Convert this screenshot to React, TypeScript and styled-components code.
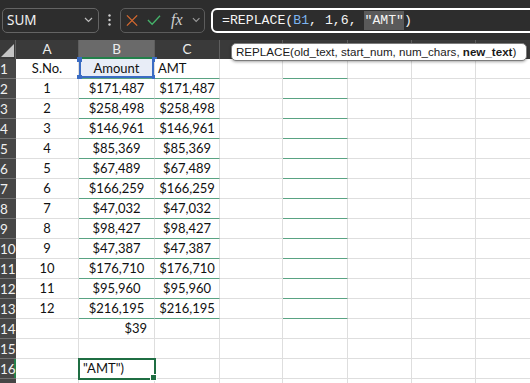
import React from 'react';
import styled, { createGlobalStyle, css } from 'styled-components';

const GlobalStyle = createGlobalStyle`
  html, body {
    margin: 0;
    padding: 0;
    background: #ffffff;
    overflow: hidden;
  }
  body {
    font-family: "Lato", "Liberation Sans", sans-serif;
  }
`;

const Screen = styled.div`
  position: relative;
  width: 530px;
  height: 383px;
  overflow: hidden;
  background: #ffffff;
`;

// ---- formula bar ----

const Toolbar = styled.div`
  height: 40px;
  background: #2d2d2d;
  display: flex;
  align-items: center;
  padding-left: 2px;
  box-sizing: border-box;
`;

const NameBox = styled.div`
  width: 97px;
  height: 25px;
  box-sizing: border-box;
  border: 1px solid #646464;
  border-radius: 5px;
  display: flex;
  align-items: center;
  justify-content: space-between;
  padding: 0 5px 0 4px;
  color: #f2f2f2;
  font-family: "Noto Sans", sans-serif;
  font-size: 13.5px;
`;

const Dots = styled.div`
  width: 21px;
  display: flex;
  justify-content: center;
`;

const FuncBox = styled.div`
  width: 85px;
  height: 25px;
  box-sizing: border-box;
  border: 1px solid #5c5c5c;
  border-radius: 5px;
  display: flex;
  align-items: center;
  padding: 0 4px 0 5px;
  gap: 9px;
`;

const Fx = styled.span`
  font-family: "Liberation Serif", serif;
  font-style: italic;
  font-size: 16px;
  color: #cfcfcf;
  margin-left: 1px;
`;

const FormulaInput = styled.div`
  flex: 1;
  margin-left: 6px;
  margin-right: -12px;
  height: 25px;
  box-sizing: border-box;
  border: 2px solid #ffffff;
  border-radius: 6px;
  display: flex;
  align-items: center;
  padding-left: 9px;
  color: #f4f4f4;
  font-family: "Liberation Mono", monospace;
  font-size: 13.2px;
  white-space: pre;
`;

const RefText = styled.span`
  color: #7db4f0;
`;

const Highlight = styled.span`
  background: #5a5a5a;
  padding: 2px 0;
`;

// ---- grid ----

const Sheet = styled.div`
  display: grid;
  grid-template-columns: 16px 63px 76px 65px 63px 65px 64px 64px 64px 64px;
  grid-template-rows: 19px;
  grid-auto-rows: 20px;
`;

const Corner = styled.div`
  background: #3a3a3a;
  border-right: 1px solid #5e5e5e;
  box-sizing: border-box;
  display: flex;
  align-items: flex-end;
  justify-content: flex-end;
  padding: 0 1px 2px 0;
`;

const ColHeader = styled.div<{ $selected?: boolean }>`
  background: ${(p) => (p.$selected ? '#6a6a6a' : '#3a3a3a')};
  border-right: 1px solid #5e5e5e;
  box-sizing: border-box;
  color: #ececec;
  font-size: 13.5px;
  line-height: 19px;
  text-align: center;
  ${(p) =>
    p.$selected &&
    css`
      box-shadow: inset 0 -2px 0 #23804a;
    `}
`;

const RowHeader = styled.div<{ $selected?: boolean }>`
  background: #464646;
  border-bottom: 1px solid #707070;
  box-sizing: border-box;
  color: #f0f0f0;
  font-size: 13.5px;
  line-height: 20px;
  white-space: nowrap;
  overflow: hidden;
  ${(p) =>
    p.$selected &&
    css`
      box-shadow: inset -2px 0 0 #23804a;
    `}
`;

type Align = 'left' | 'center' | 'right';

const Cell = styled.div<{ $align?: Align; $green?: boolean; $ref?: boolean; $active?: boolean }>`
  position: relative;
  box-sizing: border-box;
  border-right: 1px solid #dedede;
  border-bottom: 1px solid ${(p) => (p.$green ? '#5aa383' : '#dedede')};
  padding: 0 ${(p) => (p.$align === 'right' ? '7px' : '3px')} 0 3px;
  text-align: ${(p) => p.$align || 'left'};
  font-size: 13px;
  line-height: 19px;
  color: #111111;
  white-space: nowrap;
  background: #ffffff;

  ${(p) =>
    p.$ref &&
    css`
      background: #e8edf7;
      box-shadow: inset 2px 0 0 #3a6cc4, inset -2px 0 0 #3a6cc4, inset 0 -2px 0 #3a6cc4;
      &::before,
      &::after {
        content: '';
        position: absolute;
        width: 5px;
        height: 5px;
        background: #3a6cc4;
        bottom: -2px;
      }
      &::before {
        left: -2px;
      }
      &::after {
        right: -3px;
      }
    `}

  ${(p) =>
    p.$active &&
    css`
      outline: 2px solid #1f6e43;
      outline-offset: -1px;
      z-index: 2;
      padding-left: 4px;
      &::after {
        content: '';
        position: absolute;
        width: 5px;
        height: 5px;
        right: -3px;
        bottom: -3px;
        background: #1f6e43;
        border: 1px solid #ffffff;
      }
    `}
`;

const Handle = styled.span<{ $side: 'left' | 'right' }>`
  position: absolute;
  top: -2px;
  ${(p) => (p.$side === 'left' ? 'left: -2px;' : 'right: -3px;')}
  width: 5px;
  height: 5px;
  background: #3a6cc4;
`;

// ---- tooltip ----

const Tip = styled.div`
  position: absolute;
  left: 231px;
  top: 43px;
  width: 296px;
  height: 18px;
  box-sizing: border-box;
  padding: 0 4px;
  border: 1px solid #7c7c7c;
  border-radius: 5px;
  background: #ffffff;
  box-shadow: 0 1px 3px rgba(0, 0, 0, 0.35);
  font-family: "Liberation Sans", sans-serif;
  font-size: 11.6px;
  line-height: 16px;
  color: #1a1a1a;
  white-space: nowrap;
  z-index: 5;
`;

const Chevron = ({ color = '#bdbdbd' }: { color?: string }) => (
  <svg width="9" height="6" viewBox="0 0 9 6">
    <polyline points="1,1 4.5,4.5 8,1" fill="none" stroke={color} strokeWidth="1.2" />
  </svg>
);

const columns = ['A', 'B', 'C', 'D', 'E', 'F', 'G', 'H', 'I'];

const amounts = [
  '$171,487',
  '$258,498',
  '$146,961',
  '$85,369',
  '$67,489',
  '$166,259',
  '$47,032',
  '$98,427',
  '$47,387',
  '$176,710',
  '$95,960',
  '$216,195',
];

type CellSpec = { text?: string; align?: Align; ref?: boolean; active?: boolean };

function rowCells(r: number): CellSpec[] {
  const cells: CellSpec[] = columns.map(() => ({}));
  if (r === 1) {
    cells[0] = { text: 'S.No.', align: 'center' };
    cells[1] = { text: 'Amount', align: 'center', ref: true };
    cells[2] = { text: 'AMT' };
  } else if (r <= 13) {
    const v = amounts[r - 2];
    cells[0] = { text: String(r - 1), align: 'center' };
    cells[1] = { text: v, align: 'center' };
    cells[2] = { text: v, align: 'center' };
  } else if (r === 14) {
    cells[1] = { text: '$39', align: 'right' };
  } else if (r === 16) {
    cells[1] = { text: '"AMT")', active: true };
  }
  return cells;
}

const rows = Array.from({ length: 17 }, (_, i) => i + 1);

export default function App() {
  return (
    <Screen>
      <GlobalStyle />
      <Toolbar>
        <NameBox>
          <span>SUM</span>
          <Chevron />
        </NameBox>
        <Dots>
          <svg width="3" height="12" viewBox="0 0 3 12">
            <circle cx="1.5" cy="1.5" r="1.2" fill="#d0d0d0" />
            <circle cx="1.5" cy="6" r="1.2" fill="#d0d0d0" />
            <circle cx="1.5" cy="10.5" r="1.2" fill="#d0d0d0" />
          </svg>
        </Dots>
        <FuncBox>
          <svg width="13" height="13" viewBox="0 0 13 13">
            <path d="M1 1 L12 12 M12 1 L1 12" stroke="#d6692f" strokeWidth="1.4" fill="none" />
          </svg>
          <svg width="15" height="12" viewBox="0 0 15 12">
            <polyline points="1,6 5.5,10.5 14,1.5" stroke="#45b36a" strokeWidth="1.4" fill="none" />
          </svg>
          <Fx>fx</Fx>
          <Chevron color="#9a9a9a" />
        </FuncBox>
        <FormulaInput>
          =REPLACE(<RefText>B1</RefText>, 1,6, <Highlight>"AMT"</Highlight>)
        </FormulaInput>
      </Toolbar>

      <Sheet>
        <Corner>
          <svg width="13" height="13" viewBox="0 0 13 13">
            <polygon points="13,0 13,13 0,13" fill="#c4c4c4" />
          </svg>
        </Corner>
        {columns.map((c) => (
          <ColHeader key={c} $selected={c === 'B'}>
            {c}
          </ColHeader>
        ))}
        {rows.map((r) => (
          <React.Fragment key={r}>
            <RowHeader $selected={r === 16}>{r}</RowHeader>
            {rowCells(r).map((cell, ci) => (
              <Cell
                key={ci}
                $align={cell.align}
                $ref={cell.ref}
                $active={cell.active}
                $green={r <= 13 && (ci === 1 || ci === 2 || ci === 4)}
              >
                {cell.ref && (
                  <>
                    <Handle $side="left" />
                    <Handle $side="right" />
                  </>
                )}
                {cell.text}
              </Cell>
            ))}
          </React.Fragment>
        ))}
      </Sheet>

      <Tip>
        REPLACE(old_text, start_num, num_chars, <b>new_text</b>)
      </Tip>
    </Screen>
  );
}
